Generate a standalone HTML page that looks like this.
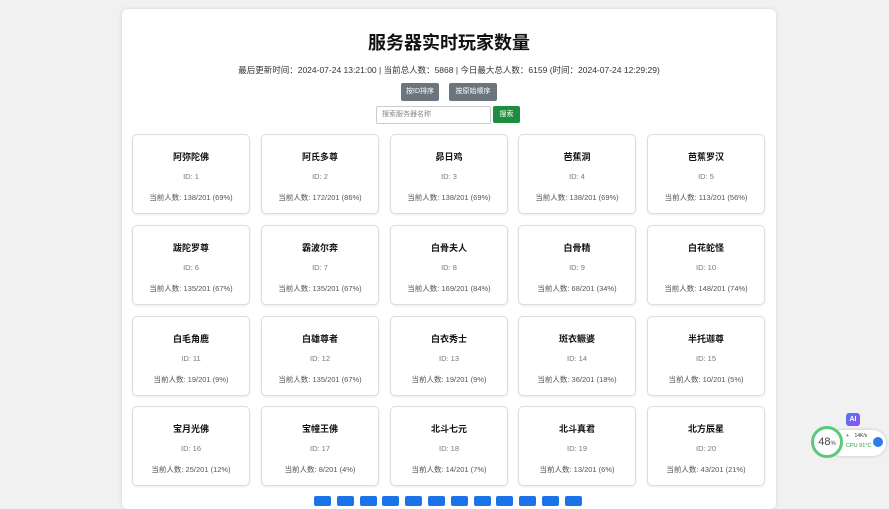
<!DOCTYPE html>
<html><head><meta charset="utf-8"><style>
*{box-sizing:border-box;margin:0;padding:0}
body{width:889px;height:500px;overflow:hidden;background:#f1f1f1;font-family:"Liberation Sans","Noto Sans CJK SC",sans-serif;color:#222;position:relative}
.panel{position:absolute;left:122px;top:9px;width:654px;height:500px;background:#fff;border-radius:6px;box-shadow:0 0 4px rgba(0,0,0,.12)}
h1{position:absolute;left:0;width:100%;top:22px;text-align:center;font-size:18px;line-height:24px;font-weight:bold;color:#111}
.info{position:absolute;left:0;width:100%;top:55px;text-align:center;font-size:8.5px;color:#333}
.btn{position:absolute;top:74px;height:18px;background:#6c757d;color:#fff;font-size:7px;line-height:18px;text-align:center;border-radius:2px}
.inp{position:absolute;left:254px;top:97px;width:115px;height:18px;border:1px solid #ccc;border-radius:2px;font-size:7px;color:#888;line-height:16px;padding-left:5px}
.go{position:absolute;left:371px;top:97px;width:27px;height:17px;background:#1e8e3e;color:#fff;font-size:7px;line-height:17px;text-align:center;border-radius:2px}
.card{position:absolute;width:118px;height:80px;border:1px solid #ddd;border-radius:5px;box-shadow:0 1px 2px rgba(0,0,0,.08);text-align:center;background:#fff}
.card b{position:absolute;top:15px;left:0;width:100%;font-size:9px;color:#111}
.card i{position:absolute;top:37px;left:0;width:100%;font-style:normal;font-size:7.5px;color:#777}
.card s{position:absolute;top:57px;left:0;width:100%;text-decoration:none;font-size:7.5px;color:#555}
.pg{position:absolute;top:496px;width:17px;height:10px;background:#1a73e8;border-radius:2px}
</style></head><body>
<div class="panel">
<h1>服务器实时玩家数量</h1>
<div class="info">最后更新时间：2024-07-24 13:21:00 | 当前总人数：5868 | 今日最大总人数：6159 (时间：2024-07-24 12:29:29)</div>
<div class="btn" style="left:279px;width:38px">按ID排序</div>
<div class="btn" style="left:327px;width:48px">按原始顺序</div>
<div class="inp">搜索服务器名称</div>
<div class="go">搜索</div>
</div>
<div class="pg" style="left:314px"></div><div class="pg" style="left:337px"></div><div class="pg" style="left:360px"></div><div class="pg" style="left:382px"></div><div class="pg" style="left:405px"></div><div class="pg" style="left:428px"></div><div class="pg" style="left:451px"></div><div class="pg" style="left:474px"></div><div class="pg" style="left:496px"></div><div class="pg" style="left:519px"></div><div class="pg" style="left:542px"></div><div class="pg" style="left:565px"></div>

<div class="card" style="left:132px;top:134px"><b>阿弥陀佛</b><i>ID: 1</i><s>当前人数: 138/201 (69%)</s></div>
<div class="card" style="left:261px;top:134px"><b>阿氏多尊</b><i>ID: 2</i><s>当前人数: 172/201 (86%)</s></div>
<div class="card" style="left:390px;top:134px"><b>昴日鸡</b><i>ID: 3</i><s>当前人数: 138/201 (69%)</s></div>
<div class="card" style="left:518px;top:134px"><b>芭蕉洞</b><i>ID: 4</i><s>当前人数: 138/201 (69%)</s></div>
<div class="card" style="left:647px;top:134px"><b>芭蕉罗汉</b><i>ID: 5</i><s>当前人数: 113/201 (56%)</s></div>
<div class="card" style="left:132px;top:225px"><b>跋陀罗尊</b><i>ID: 6</i><s>当前人数: 135/201 (67%)</s></div>
<div class="card" style="left:261px;top:225px"><b>霸波尔奔</b><i>ID: 7</i><s>当前人数: 135/201 (67%)</s></div>
<div class="card" style="left:390px;top:225px"><b>白骨夫人</b><i>ID: 8</i><s>当前人数: 169/201 (84%)</s></div>
<div class="card" style="left:518px;top:225px"><b>白骨精</b><i>ID: 9</i><s>当前人数: 68/201 (34%)</s></div>
<div class="card" style="left:647px;top:225px"><b>白花蛇怪</b><i>ID: 10</i><s>当前人数: 148/201 (74%)</s></div>
<div class="card" style="left:132px;top:316px"><b>白毛角鹿</b><i>ID: 11</i><s>当前人数: 19/201 (9%)</s></div>
<div class="card" style="left:261px;top:316px"><b>白雄尊者</b><i>ID: 12</i><s>当前人数: 135/201 (67%)</s></div>
<div class="card" style="left:390px;top:316px"><b>白衣秀士</b><i>ID: 13</i><s>当前人数: 19/201 (9%)</s></div>
<div class="card" style="left:518px;top:316px"><b>斑衣鳜婆</b><i>ID: 14</i><s>当前人数: 36/201 (18%)</s></div>
<div class="card" style="left:647px;top:316px"><b>半托迦尊</b><i>ID: 15</i><s>当前人数: 10/201 (5%)</s></div>
<div class="card" style="left:132px;top:406px"><b>宝月光佛</b><i>ID: 16</i><s>当前人数: 25/201 (12%)</s></div>
<div class="card" style="left:261px;top:406px"><b>宝幢王佛</b><i>ID: 17</i><s>当前人数: 8/201 (4%)</s></div>
<div class="card" style="left:390px;top:406px"><b>北斗七元</b><i>ID: 18</i><s>当前人数: 14/201 (7%)</s></div>
<div class="card" style="left:518px;top:406px"><b>北斗真君</b><i>ID: 19</i><s>当前人数: 13/201 (6%)</s></div>
<div class="card" style="left:647px;top:406px"><b>北方辰星</b><i>ID: 20</i><s>当前人数: 43/201 (21%)</s></div>

<div style="position:absolute;left:846px;top:413px;width:14px;height:13px;border-radius:3px;background:linear-gradient(135deg,#4a7cf0,#9b4cf0);color:#fff;font-size:7px;line-height:13px;text-align:center;font-weight:bold">AI</div>
<div style="position:absolute;left:828px;top:430px;width:58px;height:26px;border-radius:13px;background:#fff;box-shadow:0 0 3px rgba(0,0,0,.2)"></div>
<div style="position:absolute;left:873px;top:437px;width:10px;height:10px;border-radius:50%;background:#2f7be8"></div>
<div style="position:absolute;left:846px;top:433px;font-size:5px;color:#333">+ &nbsp;&nbsp;&nbsp;14K/s</div>
<div style="position:absolute;left:846px;top:443px;font-size:5.5px;color:#2a9d4a">CPU 91°C</div>
<div style="position:absolute;left:811px;top:426px;width:32px;height:32px;border-radius:50%;background:#fff;border:3px solid #5cc97a;font-size:11px;line-height:26px;text-align:center;color:#444">48<span style="font-size:6px">%</span></div>
</body></html>
